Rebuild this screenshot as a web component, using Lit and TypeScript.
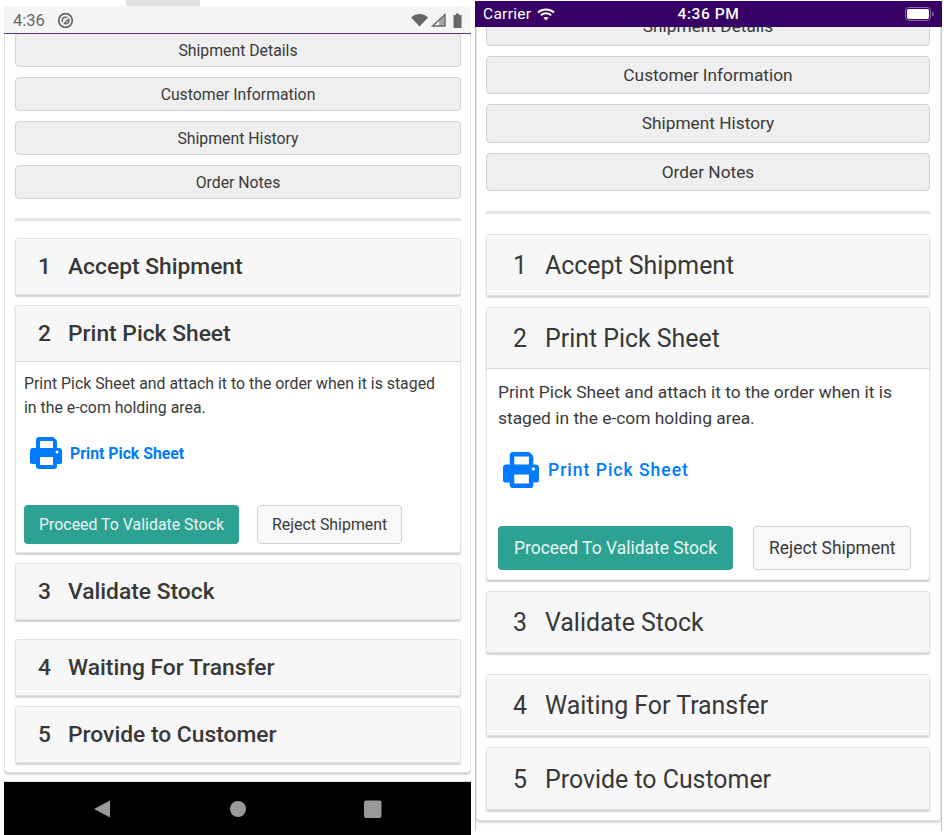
import { LitElement, html, css, svg } from "lit";
import { customElement, property } from "lit/decorators.js";

const printer = svg`<path fill="#007bff" fill-rule="evenodd" d="M6 11V3a3 3 0 0 1 3-3h13.200a3 3 0 0 1 2.100.9l1.800 1.800a3 3 0 0 1 .9 2.100V11h2a3 3 0 0 1 3 3v11a2 2 0 0 1-2 2h-3v2a3 3 0 0 1-3 3H9a3 3 0 0 1-3-3v-2H2a2 2 0 0 1-2-2V14a3 3 0 0 1 3-3ZM10 4v7h13V4ZM10 20v8h13v-8ZM25.500 15a1.500 1.500 0 1 0 3 0a1.500 1.500 0 1 0-3 0Z"/>`;

@customElement("phone-screen")
class PhoneScreen extends LitElement {
  @property() kind = "android";
  static styles = css`
    :host { display: block; font-family: Roboto, "Liberation Sans", sans-serif; color: #333; }
    .android {
      width: 467px; height: 835px; display: flex; flex-direction: column;
      --pad-l: 10px; --pad-r: 9px; --btn-h: 34px; --btn-gap: 10px; --btn-fs: 15.800px; --scroll: -1px;
      --hr-before: 19px; --hr-after: 17px; --hr-h: 3px;
      --head-h: 55px; --open-h: 56px; --head-pt: 0px; --head-fs: 22.800px; --head-w: 500; --num-w: 30px; --num-left: 22px;
      --acc-gap: 10px; --acc-gap-lg: 19px;
      --body-fs: 15.850px; --body-lh: 24px; --body-px: 8px; --body-pt: 10px; --p-pr: 12px;
      --link-fs: 15.800px; --link-w: 700; --link-sp: 0; --icon: 32px; --link-gap: 8px; --link-left: 6px; --link-top: 17px;
      --act-top: 36px; --act-h: 39px; --act-fs: 15.900px; --act-gap: 18px; --act-px: 15px; --body-pb: 8px;
      --card-pb: 9px;
    }
    .ios {
      width: 467px; height: 835px; display: flex; flex-direction: column;
      --pad-l: 9px; --pad-r: 10px; --btn-h: 38.500px; --btn-gap: 10px; --btn-fs: 17.300px; --scroll: -20px;
      --hr-before: 20px; --hr-after: 19.500px; --hr-h: 3px;
      --head-h: 60.500px; --open-h: 60.500px; --head-pt: 2px; --head-fs: 24.900px; --head-w: 400; --num-w: 32px; --num-left: 26px;
      --acc-gap: 11px; --acc-gap-lg: 20.500px;
      --body-fs: 17.400px; --body-lh: 26px; --body-px: 11px; --body-pt: 10px; --p-pr: 0px;
      --link-fs: 17.500px; --link-w: 500; --link-sp: 1px; --icon: 36px; --link-gap: 9px; --link-left: 5px; --link-top: 21px;
      --act-top: 38px; --act-h: 44px; --act-fs: 17.450px; --act-gap: 20px; --act-px: 16px; --body-pb: 9px;
      --card-pb: 10px;
    }
    .notch { height: 6px; background: #fff; padding-left: 122px; }
    .notch i { display: block; width: 74px; height: 6px; background: #e2e2e2; }
    .a-status {
      height: 28px; box-sizing: border-box; background: #f5f5f5; border-bottom: 1px solid #5c3496;
      display: flex; align-items: center; padding: 1px 9px 0; color: #666; font-size: 16.500px; gap: 12px; flex: none;
    }
    .a-status .right { margin-left: auto; display: flex; align-items: center; gap: 3px; }
    .a-status .batt { margin-left: 4px; }
    .i-status {
      margin-top: 1px; height: 26px; background: #360065; color: #fff; font-size: 15.500px;
      display: grid; grid-template-columns: 1fr auto 1fr; align-items: center; padding: 0 8px; flex: none;
    }
    .i-status .l { display: flex; align-items: center; gap: 6px; letter-spacing: .3px; }
    .i-status .c { font-weight: 500; letter-spacing: .6px; }
    .i-status .r { justify-self: end; display: flex; }
    .view { flex: none; overflow: hidden; background: #fff; }
    .android .view { height: 747px; }
    .ios .view { height: 804px; border-left: 1px solid #c8c8c8; border-right: 1px solid #c8c8c8; }
    .card {
      background: #fff; border-radius: 0 0 4px 4px; padding: 0 var(--pad-r) var(--card-pb) var(--pad-l);
      box-shadow: 0 1px 3px rgba(0,0,0,.3); margin-top: var(--scroll); border: 1px solid #e4e4e4; border-top: 0;
    }
    .btn {
      display: flex; align-items: center; justify-content: center; height: var(--btn-h); box-sizing: border-box;
      background: #efefef; border: 1.500px solid #d4d4d4; border-radius: 4px; font-size: var(--btn-fs); color: #3a3a3a;
    }
    .btn + .btn { margin-top: var(--btn-gap); }
    .hr { height: var(--hr-h); background: #e4e4e4; margin: var(--hr-before) 0 var(--hr-after); }
    .acc { border: 1px solid #e3e3e3; border-radius: 3px; box-shadow: 0 1.500px 1.500px rgba(0,0,0,.18); background: #fff; margin-bottom: var(--acc-gap); }
    .acc.lg { margin-bottom: var(--acc-gap-lg); }
    .acc.last { margin-bottom: 0; }
    .head {
      display: flex; align-items: center; height: var(--head-h); background: #f7f7f7; font-size: var(--head-fs);
      font-weight: var(--head-w); padding: var(--head-pt) 0 0 var(--num-left); color: #383838; box-sizing: border-box;
    }
    .num { width: var(--num-w); flex: none; }
    .open .head { height: var(--open-h); border-bottom: 1px solid #d8d8d8; }
    .body { padding: var(--body-pt) var(--body-px) var(--body-pb); }
    .body p { margin: 0; padding-right: var(--p-pr); font-size: var(--body-fs); line-height: var(--body-lh); color: #3a3a3a; }
    .link {
      display: flex; align-items: center; gap: var(--link-gap); margin: var(--link-top) 0 0 var(--link-left);
      color: #007bff; font-size: var(--link-fs); font-weight: var(--link-w); letter-spacing: var(--link-sp);
    }
    .link svg { width: var(--icon); height: var(--icon); flex: none; }
    .actions { display: flex; gap: var(--act-gap); margin-top: var(--act-top); }
    .act {
      height: var(--act-h); box-sizing: border-box; display: flex; align-items: center; padding: 0 var(--act-px);
      border-radius: 4px; font-size: var(--act-fs);
    }
    .primary { background: #2ea292; color: #e8f6f3; }
    .secondary { background: #f8f8f8; border: 1px solid #d0d0d0; color: #3a3a3a; padding: 0 calc(var(--act-px) - 1px); }
    .nav {
      flex: 1; background: #000; display: flex; align-items: center; justify-content: center;
      border-top: 1px solid #ddd; box-sizing: border-box;
    }
    .nav svg { width: 290px; height: 20px; }
  `;
  private step(n: number, t: string, cls = "") {
    return html`<div class="acc ${cls}"><div class="head"><span class="num">${n}</span><span>${t}</span></div></div>`;
  }
  private content() {
    return html`
      <div class="card">
        <div class="btn">Shipment Details</div>
        <div class="btn">Customer Information</div>
        <div class="btn">Shipment History</div>
        <div class="btn">Order Notes</div>
        <div class="hr"></div>
        ${this.step(1, "Accept Shipment")}
        <div class="acc open">
          <div class="head"><span class="num">2</span><span>Print Pick Sheet</span></div>
          <div class="body">
            <p>Print Pick Sheet and attach it to the order when it is staged in the e-com holding area.</p>
            <div class="link"><svg viewBox="0 0 32 32">${printer}</svg><span>Print Pick Sheet</span></div>
            <div class="actions">
              <div class="act primary">Proceed To Validate Stock</div>
              <div class="act secondary">Reject Shipment</div>
            </div>
          </div>
        </div>
        ${this.step(3, "Validate Stock", "lg")}
        ${this.step(4, "Waiting For Transfer")}
        ${this.step(5, "Provide to Customer", "last")}
      </div>`;
  }
  render() {
    if (this.kind === "android") {
      return html`<div class="android">
        <div class="notch"><i></i></div>
        <div class="a-status">
          <span>4:36</span>
          <svg width="17" height="17" viewBox="0 0 17 17"><circle cx="8.500" cy="8.500" r="6.800" fill="none" stroke="#666" stroke-width="1.800"/><circle cx="8.500" cy="8.500" r="3.300" fill="none" stroke="#666" stroke-width="1.500"/><path d="M5.500 11.500 11.500 5.500" stroke="#f5f5f5" stroke-width="1.800"/><path d="M7 11.500 12 7" stroke="#666" stroke-width="1.300"/></svg>
          <div class="right">
            <svg width="17" height="14" viewBox="0 0 17 14"><path fill="#666" d="M0 4.500C2.500 2 5.500 1 8.500 1s6 1 8.500 3.500L8.500 13.500Z"/></svg>
            <svg width="15" height="14" viewBox="0 0 15 14"><path d="M1.500 13 14 1.500V13Z" fill="none" stroke="#666" stroke-width="1.300"/><path d="M8 13V7.500l6-5.500v11Z" fill="#666" opacity=".55"/></svg>
            <svg class="batt" width="9" height="15" viewBox="1 0 8 15"><path fill="#666" d="M3.500 0.500h3v1.500H9V15H1V2h2.500Z"/></svg>
          </div>
        </div>
        <div class="view">${this.content()}</div>
        <div class="nav">
          <svg viewBox="0 0 290 20">
            <path fill="#999" d="M1 10 17 1.500v17Z"/>
            <circle cx="145" cy="10" r="8" fill="#999"/>
            <rect x="271" y="1.500" width="17.500" height="17.500" rx="2" fill="#999"/>
          </svg>
        </div>
      </div>`;
    }
    return html`<div class="ios">
      <div class="i-status">
        <div class="l"><span>Carrier</span>
          <svg width="18" height="13" viewBox="0 0 18 13"><path d="M1 4.500C5.500.5 12.500.5 17 4.500" fill="none" stroke="#fff" stroke-width="2"/><path d="M3.800 7.300c3-2.600 7.400-2.600 10.400 0" fill="none" stroke="#fff" stroke-width="2"/><path d="M6.300 9.800c1.600-1.200 3.800-1.200 5.400 0L9 12.500Z" fill="#fff"/></svg>
        </div>
        <div class="c">4:36 PM</div>
        <div class="r"><svg width="29" height="14" viewBox="0 0 29 14"><rect x=".5" y=".5" width="25" height="13" rx="3.500" fill="none" stroke="#8a6bb0"/><rect x="2" y="2" width="22" height="10" rx="2" fill="#fff"/><rect x="27" y="5" width="1.500" height="4" fill="#8a6bb0"/></svg></div>
      </div>
      <div class="view">${this.content()}</div>
    </div>`;
  }
}

@customElement("app-root")
export class AppRoot extends LitElement {
  static styles = css`
    :host { display: block; height: 835px; background: #fff; overflow: hidden; }
    .row { display: flex; gap: 4px; padding-left: 4px; }
  `;
  render() {
    return html`<div class="row"><phone-screen kind="android"></phone-screen><phone-screen kind="ios"></phone-screen></div>`;
  }
}
